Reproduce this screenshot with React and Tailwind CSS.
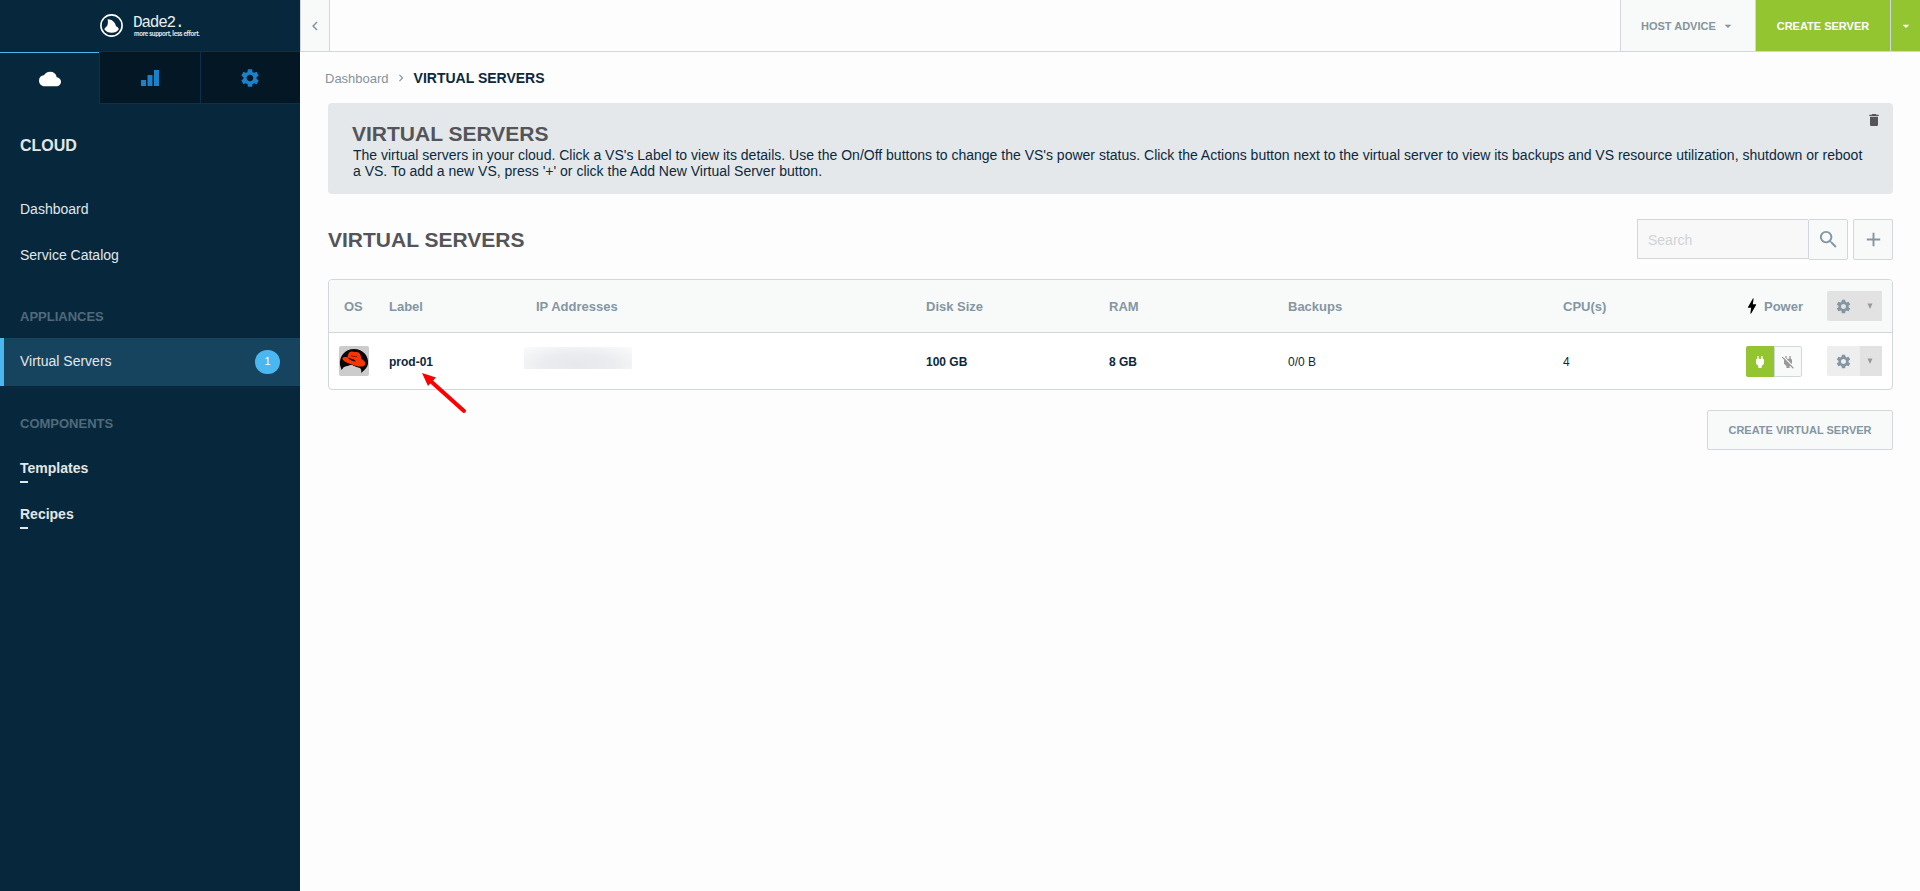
import React from 'react';
import {
  MdCloud, MdSettings, MdDelete, MdSearch, MdAdd,
  MdBolt, MdPower, MdPowerOff, MdArrowDropDown, MdChevronLeft, MdChevronRight
} from 'react-icons/md';

const columns = [
  { label: 'Label', value: 'prod-01', width: 'w-[147px]', bold: true },
  { label: 'IP Addresses', value: null, width: 'w-[390px]' },
  { label: 'Disk Size', value: '100 GB', width: 'w-[183px]', bold: true },
  { label: 'RAM', value: '8 GB', width: 'w-[179px]', bold: true },
  { label: 'Backups', value: '0/0 B', width: 'w-[275px]' },
  { label: 'CPU(s)', value: '4', width: 'w-[183px]' }
];

const Logo = () => (
  <div className="h-[51px] flex items-start pl-[100px] pt-[14px]">
    <svg className="w-[23px] h-[23px]" viewBox="0 0 23 23">
      <circle cx="11.5" cy="11.5" r="10.6" fill="none" stroke="#fff" strokeWidth="1.6" />
      <path d="M7.5 5.2C12 5 15.5 8.5 16 12.2C17.5 12.6 18.6 14 18.8 15.2C16 20 7.500 20 4.300 15.200C5 13.500 6.700 12.700 7.300 11.500C8 9.500 8.200 7 7.500 5.200Z" fill="#fff" />
    </svg>
    <div className="ml-[10px] mt-px">
      <p className="font-['Liberation_Mono'] text-[16px] leading-[16px] tracking-[-1.2px] text-[#e9eef1]">Dade2.</p>
      <p className="ml-px font-['Lato'] font-bold text-[6.5px] leading-[6px] tracking-[-0.27px] whitespace-nowrap text-[#e9eef1]">more support, less effort.</p>
    </div>
  </div>
);

const SideTabs = () => (
  <div className="h-[53px] flex">
    <div className="w-[99px] pt-px">
      <div className="h-full border-t border-[#4bb7f0] flex items-center justify-center">
        <MdCloud className="w-[22px] h-[22px] text-white" />
      </div>
    </div>
    <div className="w-[101px] border border-r-0 border-[#0a304a] bg-[#031724] flex items-center justify-center">
      <svg className="w-[18px] h-[16px]" viewBox="0 0 18 16" fill="#1a82ca">
        <rect x="0" y="10" width="5" height="6" />
        <rect x="6.500" y="5" width="5" height="11" />
        <rect x="13" y="0" width="5" height="16" />
      </svg>
    </div>
    <div className="w-[100px] border border-r-0 border-[#0a304a] bg-[#031724] pr-px flex items-center justify-center">
      <MdSettings className="w-[22px] h-[22px] text-[#1a82ca]" />
    </div>
  </div>
);

const Sidebar = () => (
  <aside className="w-[300px] shrink-0 bg-[#07283c] text-[#e2e7ea] text-sm">
    <Logo />
    <SideTabs />
    <h2 className="pl-5 mt-8 text-base leading-5 font-bold">CLOUD</h2>
    <nav className="mt-[43px]">
      <a className="block pl-5 leading-5">Dashboard</a>
      <a className="block pl-5 mt-[26px] leading-5">Service Catalog</a>
      <h3 className="pl-5 mt-[42px] text-[13px] leading-5 font-bold text-[#506a7a]">APPLIANCES</h3>
      <a className="mt-[11px] h-12 border-l-4 border-[#4bb7f0] bg-[#16435e] pl-4 pr-5 flex items-center justify-between">
        <span className="pb-[2px]">Virtual Servers</span>
        <span className="w-[25px] h-6 rounded-full bg-[#4bb7f0] text-white text-[11px] flex items-center justify-center">1</span>
      </a>
      <h3 className="pl-5 mt-[28px] text-[13px] leading-5 font-bold text-[#506a7a]">COMPONENTS</h3>
      <a className="block pl-5 mt-[24px] leading-5 font-bold">Templates</a>
      <div className="ml-5 mt-[3px] w-2 h-0.5 bg-[#e2e7ea]" />
      <a className="block pl-5 mt-[21px] leading-5 font-bold">Recipes</a>
      <div className="ml-5 mt-[3px] w-2 h-0.5 bg-[#e2e7ea]" />
    </nav>
  </aside>
);

const TopBar = () => (
  <header className="h-[52px] border-b border-[#d1d7da] flex justify-between text-[11px] font-bold">
    <button className="w-[30px] border-x border-[#d1d7da] bg-[#f8faf9] flex items-center justify-center text-[#8496a3]">
      <MdChevronLeft className="w-[18px] h-[18px]" />
    </button>
    <div className="flex">
      <button className="w-[135px] border-l border-[#d1d7da] bg-[#f8faf9] pl-5 flex items-center text-[#84949e]">
        <span className="pt-[2px]">HOST ADVICE</span>
        <MdArrowDropDown className="ml-1 w-4 h-4" />
      </button>
      <button className="w-[135px] border-l border-[#d1d7da] bg-[#92c530] text-white pt-[2px] flex items-center justify-center">CREATE SERVER</button>
      <button className="w-[30px] border-l border-[#d1d7da] bg-[#92c530] text-white flex items-center justify-center">
        <MdArrowDropDown className="w-4 h-4" />
      </button>
    </div>
  </header>
);

const RedHat = () => (
  <svg className="w-[30px] h-[30px] rounded-[2px]" viewBox="0 0 30 30">
    <rect width="30" height="30" fill="#ccc" />
    <path d="M1 19C0 10 6 3 15 3C24 3 30 10 29 18C28.500 21 26 24 22 27C22.500 25 22.500 24 21 22L17 21L12 19L5 21L2.500 24Z" fill="#080808" />
    <path d="M6 21L13 19L19 22L21 24L18 28H7C6 25 4 24 5 21Z" fill="#ccc" />
    <path d="M3.500 12C4.500 10.600 6.500 10.800 8.500 11.300C9 8.500 10 5.500 12.500 5.500C15 6.200 17.500 5.500 19.500 6.500C21.500 7.500 22 10.500 22.500 13C25.500 14.500 27.200 17 26 19C24 21.500 18 20.800 13.500 18.800C8 17 2.800 14.500 3.500 12Z" fill="#fb3404" />
    <path d="M8.500 11.300C11 14.500 14 15.500 17 15.500L15 13.500C12.500 13 10.500 12.500 8.500 11.300Z" fill="#080808" />
    <path d="M12 9.500C14 10.500 16 10.800 18 10.300" fill="none" stroke="#7d1a02" />
  </svg>
);

const ServersTable = () => (
  <section className="mt-[19px] border border-[#d1d7dc] rounded-[4px] bg-white overflow-hidden text-[#8496a3]">
    <div className="h-[53px] border-b border-[#d1d7dc] bg-[#f8faf9] flex items-center text-[13px] font-bold">
      <div className="w-[60px] shrink-0 pl-[15px] pt-[2px]">OS</div>
      {columns.map((col) => (
        <div key={col.label} className={`shrink-0 pt-[2px] ${col.width}`}>{col.label}</div>
      ))}
      <div className="w-[81px] shrink-0 flex items-center">
        <MdBolt className="-ml-1 w-5 h-5 text-black" />
        <span className="ml-[2px] pt-[2px]">Power</span>
      </div>
      <button className="w-[55px] h-[30px] rounded-l-[2px] bg-[#e2e2e2] flex items-center">
        <MdSettings className="ml-2 w-[17px] h-[17px]" />
        <svg className="ml-[15px] w-[6px] h-[6px]" viewBox="0 0 6 6"><path d="M0.500 0.500H5.500L3 6Z" fill="#999" /></svg>
      </button>
    </div>
    <div className="h-14 flex items-center text-xs text-[#0a2940]">
      <div className="w-[60px] shrink-0 pl-[10px]"><RedHat /></div>
      {columns.map((col) => (
        <div key={col.label} className={`shrink-0 ${col.width} ${col.value ? 'pt-[2px]' : ''} ${col.bold ? 'font-bold' : ''}`}>
          {col.value ?? (
            <div className="-ml-3 -mt-[6px] w-[108px] h-[22px] bg-[radial-gradient(ellipse_at_50%_80%,#e6e8ec_0%,#eaecef_45%,#fbfbfc_100%)]" />
          )}
        </div>
      ))}
      <div className="w-[81px] shrink-0 -mb-px flex">
        <button className="w-7 h-[31px] rounded-l-[2px] bg-[#92c530] text-white flex items-center justify-center">
          <MdPower className="w-4 h-4" />
        </button>
        <button className="w-7 h-[31px] rounded-r-[2px] border border-[#d1d7dc] bg-[#f8faf9] text-[#999] flex items-center justify-center">
          <MdPowerOff className="w-4 h-4" />
        </button>
      </div>
      <button className="w-[55px] h-[30px] rounded-l-[2px] bg-[#eee] text-[#8496a3] flex items-center overflow-hidden">
        <MdSettings className="ml-2 w-[17px] h-[17px]" />
        <span className="ml-2 w-[22px] h-full bg-[#e2e2e2] flex items-center pl-[7px]">
          <svg className="w-[6px] h-[6px]" viewBox="0 0 6 6"><path d="M0.500 0.500H5.500L3 6Z" fill="#999" /></svg>
        </span>
      </button>
    </div>
  </section>
);

const App = () => {
  return (
    <div className="relative flex h-screen overflow-hidden bg-[#fdfdfd] font-['Liberation_Sans',Arial,sans-serif]">
      <Sidebar />
      <main className="flex-1 min-w-0">
        <TopBar />
        <div className="pl-7 pr-[27px]">
          {/* Breadcrumbs */}
          <div className="-ml-[3px] mt-4 h-5 flex items-center text-[13px] text-[#84949e]">
            <span className="pt-px">Dashboard</span>
            <MdChevronRight className="ml-[5px] w-[14px] h-[14px]" />
            <span className="ml-[6px] text-sm font-bold text-[#0a2940]">VIRTUAL SERVERS</span>
          </div>

          {/* Help panel */}
          <section className="mt-[15px] h-[91px] rounded-[4px] bg-[#e5e8eb] pt-[18px] pl-[25px] flex justify-between">
            <div className="w-[1513px] shrink-0">
              <h1 className="-ml-px text-[21px] leading-[26px] font-bold text-[#545459]">VIRTUAL SERVERS</h1>
              <p className="text-sm leading-4 text-[#0a2940]">
                The virtual servers in your cloud. Click a VS's Label to view its details. Use the On/Off buttons to change the VS's power status. Click the Actions button next to the virtual server to view its backups and VS resource utilization, shutdown or reboot a VS. To add a new VS, press '+' or click the Add New Virtual Server button.
              </p>
            </div>
            <MdDelete className="-mt-[9px] mr-[11px] w-4 h-4 shrink-0 text-[#545459]" />
          </section>

          <div className="mt-[25px] flex justify-between">
            <h2 className="mt-2 text-[21px] leading-[26px] font-bold text-[#545459]">VIRTUAL SERVERS</h2>
            <div className="flex">
              <input
                className="w-[171px] h-10 border border-r-0 border-[#d1d7dc] bg-[#f8f8f8] px-[10px] pt-[2px] text-sm placeholder:text-[#cfd4d6]"
                placeholder="Search"
              />
              <button className="w-10 h-[41px] rounded-[2px] border border-[#d1d7dc] bg-[#f8faf9] text-[#8496a3] flex items-center justify-center">
                <MdSearch className="w-[23px] h-[23px]" />
              </button>
              <button className="ml-[5px] w-10 h-[41px] rounded-[2px] border border-[#d1d7dc] bg-[#f8faf9] text-[#8496a3] flex items-center justify-center">
                <MdAdd className="w-[23px] h-[23px]" />
              </button>
            </div>
          </div>

          <ServersTable />

          <div className="mt-5 flex justify-end">
            <button className="w-[186px] h-10 rounded-[2px] border border-[#d1d7dc] bg-[#f8faf9] text-[11px] font-bold text-[#8496a3]">
              CREATE VIRTUAL SERVER
            </button>
          </div>
        </div>
      </main>

      {/* Pointer to the server label */}
      <svg className="absolute left-[420px] top-[371px] w-12 h-12" viewBox="0 0 48 48">
        <path d="M10 9.500L44 40" stroke="#fe0000" strokeWidth="4" strokeLinecap="round" />
        <path d="M2 2L16 6.500L8 15Z" fill="#fe0000" />
      </svg>
    </div>
  );
};

export default App;
